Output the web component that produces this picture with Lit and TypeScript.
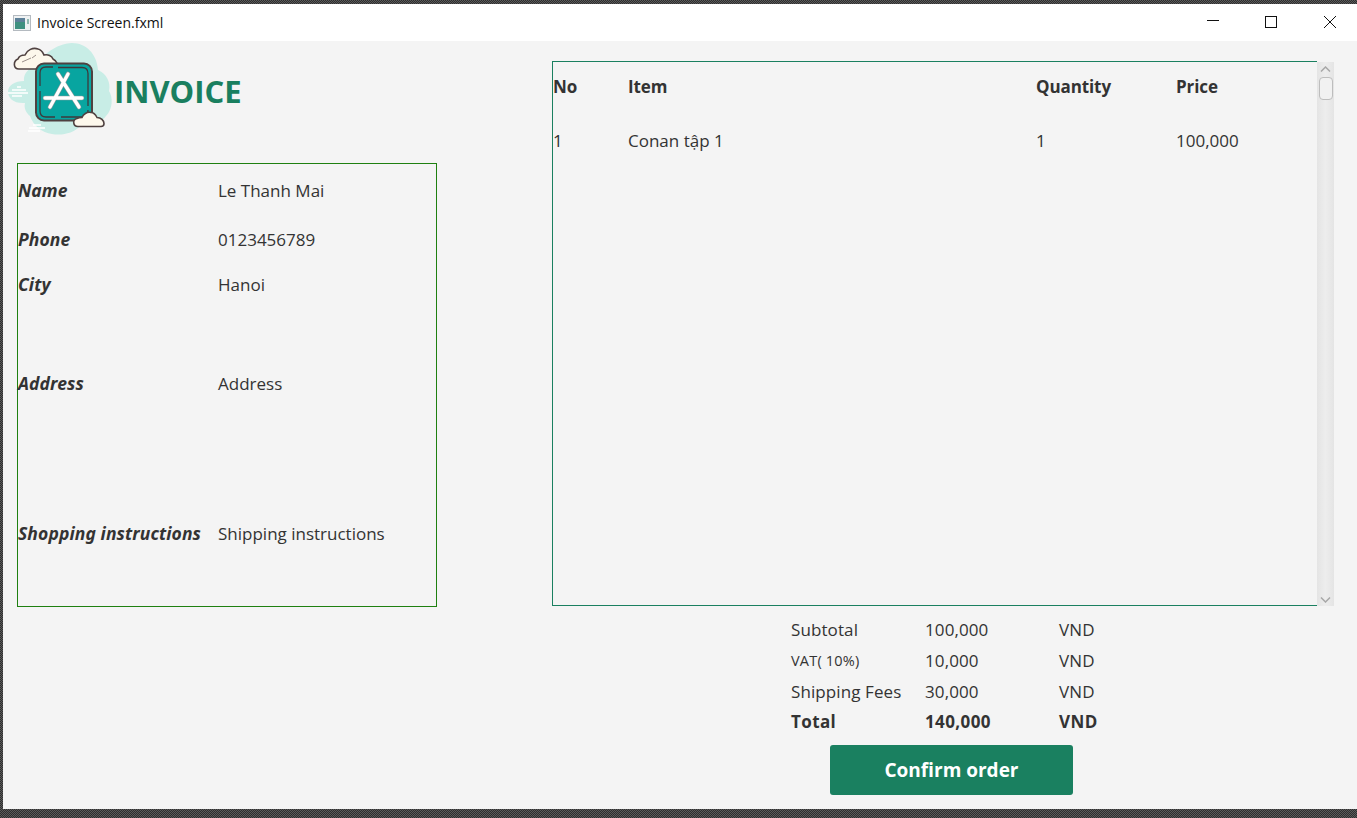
import { LitElement, html, css } from 'lit';
import { customElement } from 'lit/decorators.js';

const FIELDS = [
  ['Name', 'Le Thanh Mai'],
  ['Phone', '0123456789'],
  ['City', 'Hanoi'],
  ['Address', 'Address'],
  ['Shopping instructions', 'Shipping instructions'],
];

const TOTALS = [
  { label: 'Subtotal', value: '100,000', cls: '' },
  { label: 'VAT( 10%)', value: '10,000', cls: 'vat' },
  { label: 'Shipping Fees', value: '30,000', cls: '' },
  { label: 'Total', value: '140,000', cls: 'total' },
];

@customElement('app-root')
export class AppRoot extends LitElement {
  static styles = css`
    :host {
      display: block;
      width: 1357px;
      height: 818px;
      overflow: hidden;
      font-family: 'Open Sans', 'Noto Sans', sans-serif;
      color: #333;
      background: repeating-conic-gradient(#2e2e2e 0 25%, #5a5a5a 0 50%) 0 0 / 2px 2px;
    }
    .window {
      margin: 4px 0 0 3px;
      height: 805px;
      display: flex;
      flex-direction: column;
      background: #f4f4f4;
    }
    .titlebar {
      height: 37px;
      box-sizing: border-box;
      flex: none;
      display: flex;
      align-items: center;
      background: #fff;
      padding: 0 21px 0 10px;
      color: #111;
      font-size: 14px;
    }
    .appicon { margin-right: 6px; }
    .titletext { flex: 1; }
    .controls { display: flex; gap: 46px; align-items: center; margin-bottom: 1px; }
    .controls svg { display: block; }
    .controls svg:last-child { margin-left: 1px; }
    .content {
      flex: 1;
      display: grid;
      grid-template-columns: 549px 782px;
    }
    .left { padding: 1px 0 0 14px; }
    .brand { display: flex; align-items: center; height: 94px; margin-left: -9px; }
    .brand svg { display: block; flex: none; }
    .brand h1 {
      margin: 4px 0 0 -2px;
      font-size: 31px;
      font-weight: 700;
      color: #1a7f5f;
    }
    .details {
      margin-top: 27px;
      width: 420px;
      height: 444px;
      box-sizing: border-box;
      border: 1px solid #1f8010;
      display: grid;
      grid-template-columns: 200px 1fr;
      grid-template-rows: 54px 44px 46px 152px 148px;
      align-items: center;
      font-size: 17px;
    }
    .details span, .details b { padding-bottom: 2px; }
    .details b {
      font-family: 'Noto Sans', sans-serif;
      font-size: 17.500px;
      font-style: italic;
      font-weight: 700;
      letter-spacing: 0.1px;
      white-space: nowrap;
    }
    .right { padding-top: 20px; }
    .table {
      height: 545px;
      display: flex;
    }
    .rows {
      flex: 1;
      box-sizing: border-box;
      border: 1px solid #1a8060;
      border-right: none;
      font-size: 17px;
    }
    .row {
      display: grid;
      grid-template-columns: 75px 408px 140px 1fr;
      align-items: center;
      height: 60px;
    }
    .row.head { height: 48px; font-weight: 700; letter-spacing: -0.1px; }
    .scrollbar {
      width: 17px;
      flex: none;
      margin-top: 1px;
      display: flex;
      flex-direction: column;
      align-items: center;
      background: linear-gradient(90deg, #e4e4e4, #ededed 50%, #e4e4e4);
    }
    .arrow { flex: none; height: 13px; display: flex; align-items: center; justify-content: center; }
    .thumb {
      width: 14px;
      height: 23px;
      margin-top: 2px;
      box-sizing: border-box;
      border: 1px solid #bdbdbd;
      border-radius: 4px;
      background: #f1f1f1;
    }
    .track { flex: 1; }
    .summary {
      margin: 8px 0 0 239px;
      display: grid;
      grid-template-columns: 134px 134px 1fr;
      grid-template-rows: 31px 31px 31px 29px;
      align-items: center;
      font-size: 17px;
      letter-spacing: 0.1px;
    }
    .summary .vat { font-size: 14.500px; letter-spacing: 0.2px; }
    .summary .total { font-weight: 700; letter-spacing: 0.4px; }
    .confirm {
      display: block;
      margin: 9px 0 0 278px;
      width: 243px;
      height: 50px;
      border: none;
      border-radius: 3px;
      background: #1a8060;
      color: #fff;
      font: 700 19px 'Open Sans', 'Noto Sans', sans-serif;
      padding: 0;
    }
  `;

  logo() {
    return html`
      <svg width="108" height="94" viewBox="8 42 108 94" aria-hidden="true">
        <path fill="#c8ede6" d="M72 43C86 43 97 54 98 70C107 74 111 83 109 91C113 97 113 109 106 116C100 124 90 127 80 126C74 133 62 136 52 134C42 133 33 125 30 116C25 112 24 107 25 103C14 104 8 98 8 92C8 85 15 81 24 81C23 73 30 66 38 68C40 55 56 44 72 43z"/>
        <path stroke="#fff" stroke-width="1.500" fill="none" d="M17 87h4M12 90h14M6 93h22M12 96h10M33 125h8M29 128h16M28 131h12"/>
        <path fill="#fdf8ec" stroke="#4f4140" stroke-width="1.600" d="M19 69c-6 0-6-8-1-10 1-3 4-4 7-4 2-5 8-8 13-6 4 1 5 4 6 6 4-1 8 1 9 4 4 2 6 7 4 9-1 1-28 1-38 1z"/>
        <path stroke="#9a8f8a" stroke-width="1" fill="none" d="M22 62l9-4M32 58l4-3"/>
        <rect x="36" y="63.500" width="56" height="57" rx="8" fill="#08a5a0" stroke="#4f4140" stroke-width="2"/>
        <path fill="none" stroke="#3d3a3c" stroke-width="1.300" d="M58 67.500H82q6 0 6 6V106M88 110q0 7-6 7H61M55 117H46q-6 0-6-6V91M40 86V73q0-6 6-6h7"/>
        <g fill="none" stroke="#8a9a9a" stroke-width="4.600" stroke-linecap="round">
          <path d="M68 74 50 107M58 74l21 33M45 98h37"/>
        </g>
        <g fill="none" stroke="#fff" stroke-width="3.400" stroke-linecap="round">
          <path d="M68 74 50 107M58 74l21 33M45 98h37"/>
        </g>
        <path fill="#fdf8ec" stroke="#4f4140" stroke-width="1.600" d="M78 126.500c-5 0-6-7-1-8 2-1 3-1 5-1 1-3 5-6 9-5 3 0 5 3 6 5 4 0 7 3 7 6 0 2-1 3-3 3z"/>
      </svg>
    `;
  }

  render() {
    return html`
      <div class="window">
        <div class="titlebar">
          <svg class="appicon" width="18" height="16" viewBox="0 0 18 16" aria-hidden="true">
            <rect x=".5" y=".5" width="17" height="15" fill="#eef1f2" stroke="#b4bac0"/>
            <rect x="2" y="3" width="10" height="11" fill="#3f9080"/>
            <rect x="2" y="3" width="10" height="4" fill="#5d8098"/>
            <rect x="14" y="4" width="2" height="5" fill="#8fb8b0"/>
          </svg>
          <span class="titletext">Invoice Screen.fxml</span>
          <div class="controls">
            <svg width="12" height="12" viewBox="0 0 12 12"><path d="M0 4.500h12" stroke="#111" fill="none"/></svg>
            <svg width="12" height="12" viewBox="0 0 12 12"><rect x=".5" y=".5" width="11" height="11" stroke="#111" fill="none"/></svg>
            <svg width="12" height="12" viewBox="0 0 12 12"><path d="M0 0l12 12M12 0 0 12" stroke="#111" fill="none"/></svg>
          </div>
        </div>
        <div class="content">
          <div class="left">
            <div class="brand">${this.logo()}<h1>INVOICE</h1></div>
            <div class="details">
              ${FIELDS.map(([k, v]) => html`<b>${k}</b><span>${v}</span>`)}
            </div>
          </div>
          <div class="right">
            <div class="table">
              <div class="rows">
                <div class="row head"><span>No</span><span>Item</span><span>Quantity</span><span>Price</span></div>
                <div class="row"><span>1</span><span>Conan tập 1</span><span>1</span><span>100,000</span></div>
              </div>
              <div class="scrollbar">
                <div class="arrow">
                  <svg width="11" height="6" viewBox="0 0 11 6"><path d="M1 5.500 5.500 1 10 5.500" stroke="#a8a8a8" stroke-width="1.500" fill="none"/></svg>
                </div>
                <div class="thumb"></div>
                <div class="track"></div>
                <div class="arrow">
                  <svg width="11" height="6" viewBox="0 0 11 6"><path d="M1 .5 5.500 5 10 .5" stroke="#a8a8a8" stroke-width="1.500" fill="none"/></svg>
                </div>
              </div>
            </div>
            <div class="summary">
              ${TOTALS.map(
                (t) => html`
                  <span class=${t.cls}>${t.label}</span>
                  <span class=${t.cls === 'total' ? 'total' : ''}>${t.value}</span>
                  <span class=${t.cls === 'total' ? 'total' : ''}>VND</span>
                `
              )}
            </div>
            <button class="confirm">Confirm order</button>
          </div>
        </div>
      </div>
    `;
  }
}
